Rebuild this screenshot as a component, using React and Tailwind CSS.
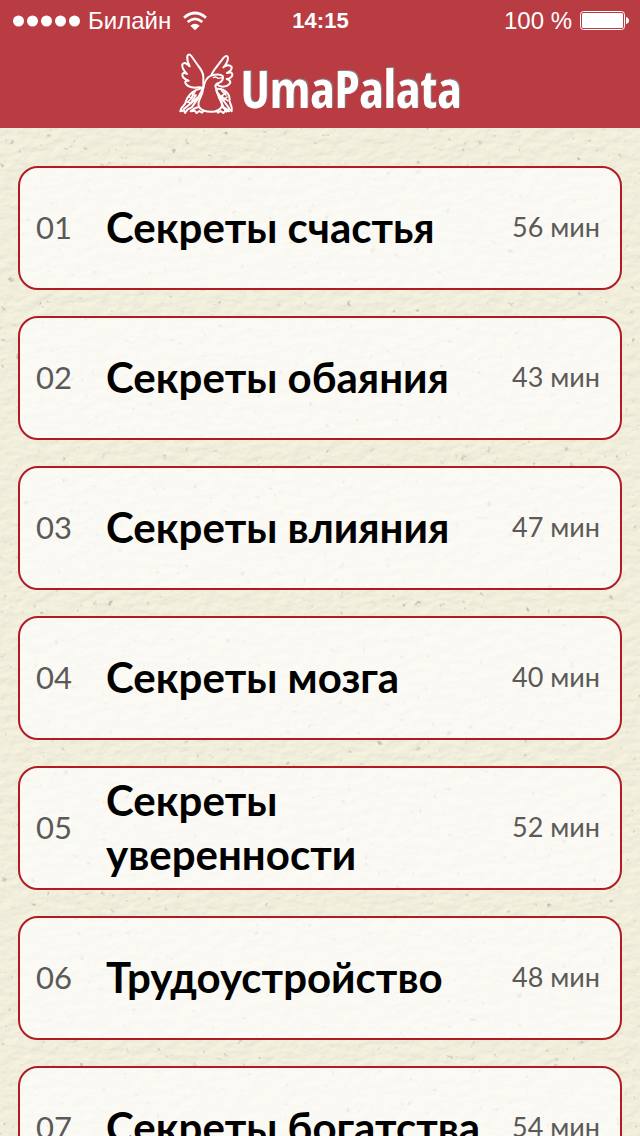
const courses = [
  { id: "01", title: "Секреты счастья", minutes: 56 },
  { id: "02", title: "Секреты обаяния", minutes: 43 },
  { id: "03", title: "Секреты влияния", minutes: 47 },
  { id: "04", title: "Секреты мозга", minutes: 40 },
  { id: "05", title: "Секреты уверенности", minutes: 52 },
  { id: "06", title: "Трудоустройство", minutes: 48 },
  { id: "07", title: "Секреты богатства", minutes: 54 },
];

function PaperTexture() {
  return (
    <svg className="pointer-events-none absolute inset-0 h-full w-full" aria-hidden="true">
      <filter id="fibres" x="0" y="0" width="100%" height="100%" colorInterpolationFilters="sRGB">
        <feTurbulence type="fractalNoise" baseFrequency="0.07 0.12" numOctaves="3" seed="8" result="n" />
        <feDiffuseLighting in="n" surfaceScale="0.8" diffuseConstant="1.08" lightingColor="#f1eddb">
          <feDistantLight azimuth="235" elevation="68" />
        </feDiffuseLighting>
      </filter>
      <filter id="specks" x="0" y="0" width="100%" height="100%" colorInterpolationFilters="sRGB">
        <feTurbulence type="fractalNoise" baseFrequency="0.13" numOctaves="3" seed="21" />
        <feColorMatrix values="0 0 0 0 0.5  0 0 0 0 0.49  0 0 0 0 0.43  6 0 0 0 -4.35" />
      </filter>
      <rect width="100%" height="100%" filter="url(#fibres)" opacity="0.4" />
      <rect width="100%" height="100%" filter="url(#specks)" opacity="0.4" />
    </svg>
  );
}

function Wifi() {
  return (
    <svg className="h-5 w-6" viewBox="0 0 72 60" fill="none" stroke="#fff" strokeWidth="8" aria-label="Wi-Fi">
      <path d="M3 20Q36-8 69 20" />
      <path d="M14 33Q36 14 58 33" />
      <path d="M36 58 22 44Q36 33 50 44Z" fill="#fff" stroke="none" />
    </svg>
  );
}

function Battery() {
  return (
    <svg className="h-5 w-[49px]" viewBox="0 0 49 20" aria-label="Батарея">
      <rect x="0.5" y="0.5" width="44" height="18" rx="3" fill="none" stroke="#fff" />
      <rect x="2" y="2" width="41" height="15" rx="1.500" fill="#fff" />
      <path d="M46 6q3 1 3 3.500T46 13Z" fill="#fff" />
    </svg>
  );
}

function Bird() {
  return (
    <svg
      className="h-16 w-14"
      viewBox="30 24 168 192"
      fill="none"
      stroke="#fff"
      strokeWidth="6"
      strokeLinecap="round"
      strokeLinejoin="round"
      aria-hidden="true"
    >
      <path d="M103 128V98Q102 83 88 66L67 36Q60 27 55 36Q53 51 62 67Q48 51 40 61Q37 72 54 90Q40 82 40 94Q43 106 59 110Q47 109 49 117Q56 130 78 131Q91 128 103 132" />
      <path d="M128 91 137 76 164 41Q175 30 177 42Q176 57 163 70Q178 58 188 69Q189 80 174 87Q191 82 190 93Q187 104 173 105Q184 107 184 116Q178 128 160 128Q150 127 143 121" />
      <path d="M103 133Q108 102 126 95Q151 87 161 96Q165 110 151 116Q141 118 139 126Q143 144 152 161Q163 181 157 190Q145 205 126 203Q101 203 91 190Q84 180 94 161Q102 148 103 128" />
      <path d="M133 101Q141 96 147 103M147 103 162 101" strokeWidth="4" />
      <path d="M101 132Q82 135 70 145Q54 158 49 178L37 193 34 202 45 199 48 207 56 196 68 190 85 166 100 137M45 195 88 159" />
      <path d="M78 143 69 157M69 149 80 156M60 158 72 167M71 158 57 174M81 153 67 174M53 173 66 178" strokeWidth="5" />
      <path d="M143 134Q163 133 174 146Q184 157 181 170L188 190V202L180 195 172 203 165 192 151 163 142 139M148 149 180 192" />
      <path d="M158 140 171 153M170 147 158 156M159 158 176 170M174 159 162 170" strokeWidth="5" />
      <path d="M91 190Q79 189 65 202L77 200 83 207 91 201 99 206 105 200M157 190Q169 190 180 202L169 200 163 207 155 201 147 206 142 200" />
    </svg>
  );
}

function StatusBar() {
  return (
    <div className="grid h-10 grid-cols-[1fr_auto_1fr] items-center pt-0.5 pr-[11px] pl-3 font-['Liberation_Sans',Arial,sans-serif] text-2xl leading-9">
      <div className="flex items-center">
        <svg className="h-3 w-[70px]" viewBox="0 0 70 12" fill="#fff" aria-label="Сигнал">
          <circle cx="6.500" cy="6" r="5.500" />
          <circle cx="20.500" cy="6" r="5.500" />
          <circle cx="34.500" cy="6" r="5.500" />
          <circle cx="48.500" cy="6" r="5.500" />
          <circle cx="62.500" cy="6" r="5.500" />
        </svg>
        <span className="mr-3 ml-1.5">Билайн</span>
        <Wifi />
      </div>
      <time className="text-[22px] font-bold">14:15</time>
      <div className="flex items-center justify-end gap-2">
        <span>100 %</span>
        <Battery />
      </div>
    </div>
  );
}

export default function App() {
  return (
    <div className="relative flex h-screen flex-col overflow-hidden bg-[#f2efde]">
      <header className="relative z-10 bg-[#b83c42] text-white">
        <StatusBar />
        <div className="flex h-22 items-center justify-center gap-1.5">
          <Bird />
          <h1 className="pt-2 font-['Open_Sans_Condensed','Open_Sans',sans-serif] text-[52px] leading-none font-bold [text-shadow:1px_-1px_1px_#888]">
            UmaPalata
          </h1>
        </div>
      </header>
      <PaperTexture />
      <main className="relative min-h-0 flex-1 overflow-y-auto px-[18px] pt-[38px] [scrollbar-width:none]">
        <ul className="flex flex-col gap-[26px] pb-[38px] font-['Lato',sans-serif]">
          {courses.map((c) => (
            <li key={c.id}>
              <button
                type="button"
                className="flex min-h-[124px] w-full items-center rounded-[20px] border-2 border-[#b01c24] bg-white/65 pr-5 pb-0.5 pl-4 text-left text-[#5a5a5a]"
              >
                <span className="w-[70px] shrink-0 text-[31px]">{c.id}</span>
                <span className="min-w-0 flex-1 text-[42px] leading-[54px] font-bold text-black">{c.title}</span>
                <span className="shrink-0 text-[27px]">{c.minutes} мин</span>
              </button>
            </li>
          ))}
        </ul>
      </main>
    </div>
  );
}
